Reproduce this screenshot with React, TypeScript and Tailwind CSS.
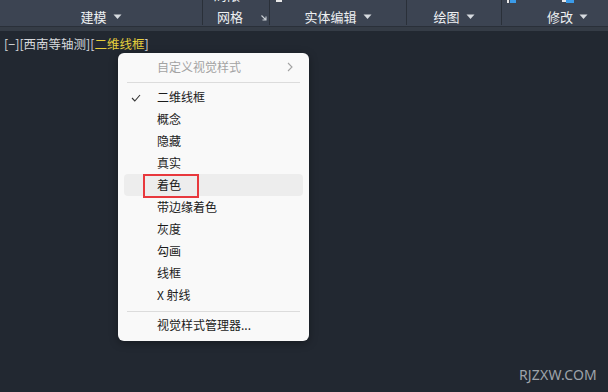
import React from "react";

const font = { fontFamily: '"Noto Sans CJK SC", "Noto Sans", sans-serif' };

function Caret() {
  return (
    <svg width="9" height="6" viewBox="0 0 9 6" className="ml-[6px]">
      <path d="M0.5 0.5 L8.5 0.5 L4.5 5 Z" fill="#d7dbe0" />
    </svg>
  );
}

const items = ["二维线框", "概念", "隐藏", "真实", "着色", "带边缘着色", "灰度", "勾画", "线框", "X 射线"];

export default function App() {
  return (
    <div className="relative w-[608px] h-[392px] bg-[#222831] overflow-hidden" style={font}>
      {/* Ribbon */}
      <div className="h-[27px] bg-[#3c4452] flex text-[13px] text-[#eef0f2] border-b border-[#2a3039]">
        <div className="w-[202px] relative flex items-center justify-center pt-[8px]">
          <span className="leading-[18px]">建模</span>
          <Caret />
        </div>
        <div className="w-[1px] bg-[#2a3039] h-[25px]" />
        <div className="w-[66px] relative flex items-center pt-[8px] pl-[14px]">
          <span className="absolute left-[11px] top-[-13px] leading-[16px] text-[13px]">局限</span>
          <span className="leading-[18px]">网格</span>
          <svg width="6" height="6" viewBox="0 0 6 6" className="ml-[18px] mt-[2px]">
            <path d="M0.5 0.5 L5 5 M5 1.5 L5 5 L1.5 5" stroke="#c9ced4" strokeWidth="1.1" fill="none" />
          </svg>
        </div>
        <div className="w-[1px] bg-[#2a3039] h-[25px]" />
        <div className="w-[136px] relative flex items-center justify-center pt-[8px]">
          <div className="absolute left-[6px] top-0 w-[6px] h-[2px] bg-[#e8e8e8]" />
          <span className="leading-[18px]">实体编辑</span>
          <Caret />
        </div>
        <div className="w-[1px] bg-[#2a3039] h-[25px]" />
        <div className="w-[94px] relative flex items-center justify-center pt-[8px]">
          <span className="leading-[18px]">绘图</span>
          <Caret />
        </div>
        <div className="w-[1px] bg-[#2a3039] h-[25px]" />
        <div className="flex-1 relative flex items-center justify-end pr-[20px] pt-[8px]">
          <div className="absolute left-[5px] top-0 w-[2px] h-[3px] bg-[#e8e8e8]" />
          <div className="absolute left-[8px] top-0 w-[6px] h-[3px] bg-[#3b9be8]" />
          <div className="absolute left-[60px] top-0 w-[4px] h-[2px] bg-[#e8e8e8]" />
          <div className="absolute left-[64px] top-0 w-[8px] h-[3px] bg-[#3b9be8]" />
          <span className="leading-[18px]">修改</span>
          <Caret />
        </div>
      </div>
      <div className="h-[4px] bg-[#353c46]" />

      {/* Viewport label */}
      <div className="pl-[4px] pt-[5px] text-[12.5px] leading-[16px] text-[#d6d8dc]">
        [−][西南等轴测][<span className="text-[#e6cf3c]">二维线框</span>]
      </div>

      {/* Context menu */}
      <div className="absolute left-[118px] top-[53px] w-[191px] h-[288px] bg-[#f9f9f9] rounded-[6px] shadow-[0_2px_8px_rgba(0,0,0,0.35)] px-[6px] pt-[3px] text-[12px] text-[#1b1b1b]">
        <div className="h-[22px] flex items-center pl-[33px] pr-[10px] text-[#a3a3a3]">
          <span className="flex-1">自定义视觉样式</span>
          <svg width="6" height="10" viewBox="0 0 6 10">
            <path d="M1 1 L5 5 L1 9" stroke="#a3a3a3" strokeWidth="1.1" fill="none" />
          </svg>
        </div>
        <div className="mx-[3px] mt-[4px] mb-[3px] h-[1px] bg-[#dcdcdc]" />
        <div className="flex flex-col">
          {items.map((t, i) => (
            <div
              key={t}
              className={
                "relative h-[22px] flex items-center pl-[33px] rounded-[4px] " +
                (t === "着色" ? "bg-[#ededed]" : "")
              }
            >
              {i === 0 && (
                <svg width="10" height="8" viewBox="0 0 10 8" className="absolute left-[7px] top-[8px]">
                  <path d="M1 4 L3.8 7 L9 1" stroke="#333" strokeWidth="1.1" fill="none" />
                </svg>
              )}
              {t === "着色" && (
                <div className="absolute left-[19px] top-0 w-[56px] h-[24px] border-2 border-[#e8383d]" />
              )}
              <span>{t}</span>
            </div>
          ))}
        </div>
        <div className="mx-[3px] mt-[5px] mb-[2px] h-[1px] bg-[#dcdcdc]" />
        <div className="h-[22px] flex items-center pl-[33px]">视觉样式管理器...</div>
      </div>

      {/* Watermark */}
      <div className="absolute right-[11px] bottom-[7px] text-[14px] text-[#9ea3aa] tracking-[0.2px]" style={{ fontFamily: '"Noto Sans", sans-serif' }}>
        RJZXW.COM
      </div>
    </div>
  );
}
